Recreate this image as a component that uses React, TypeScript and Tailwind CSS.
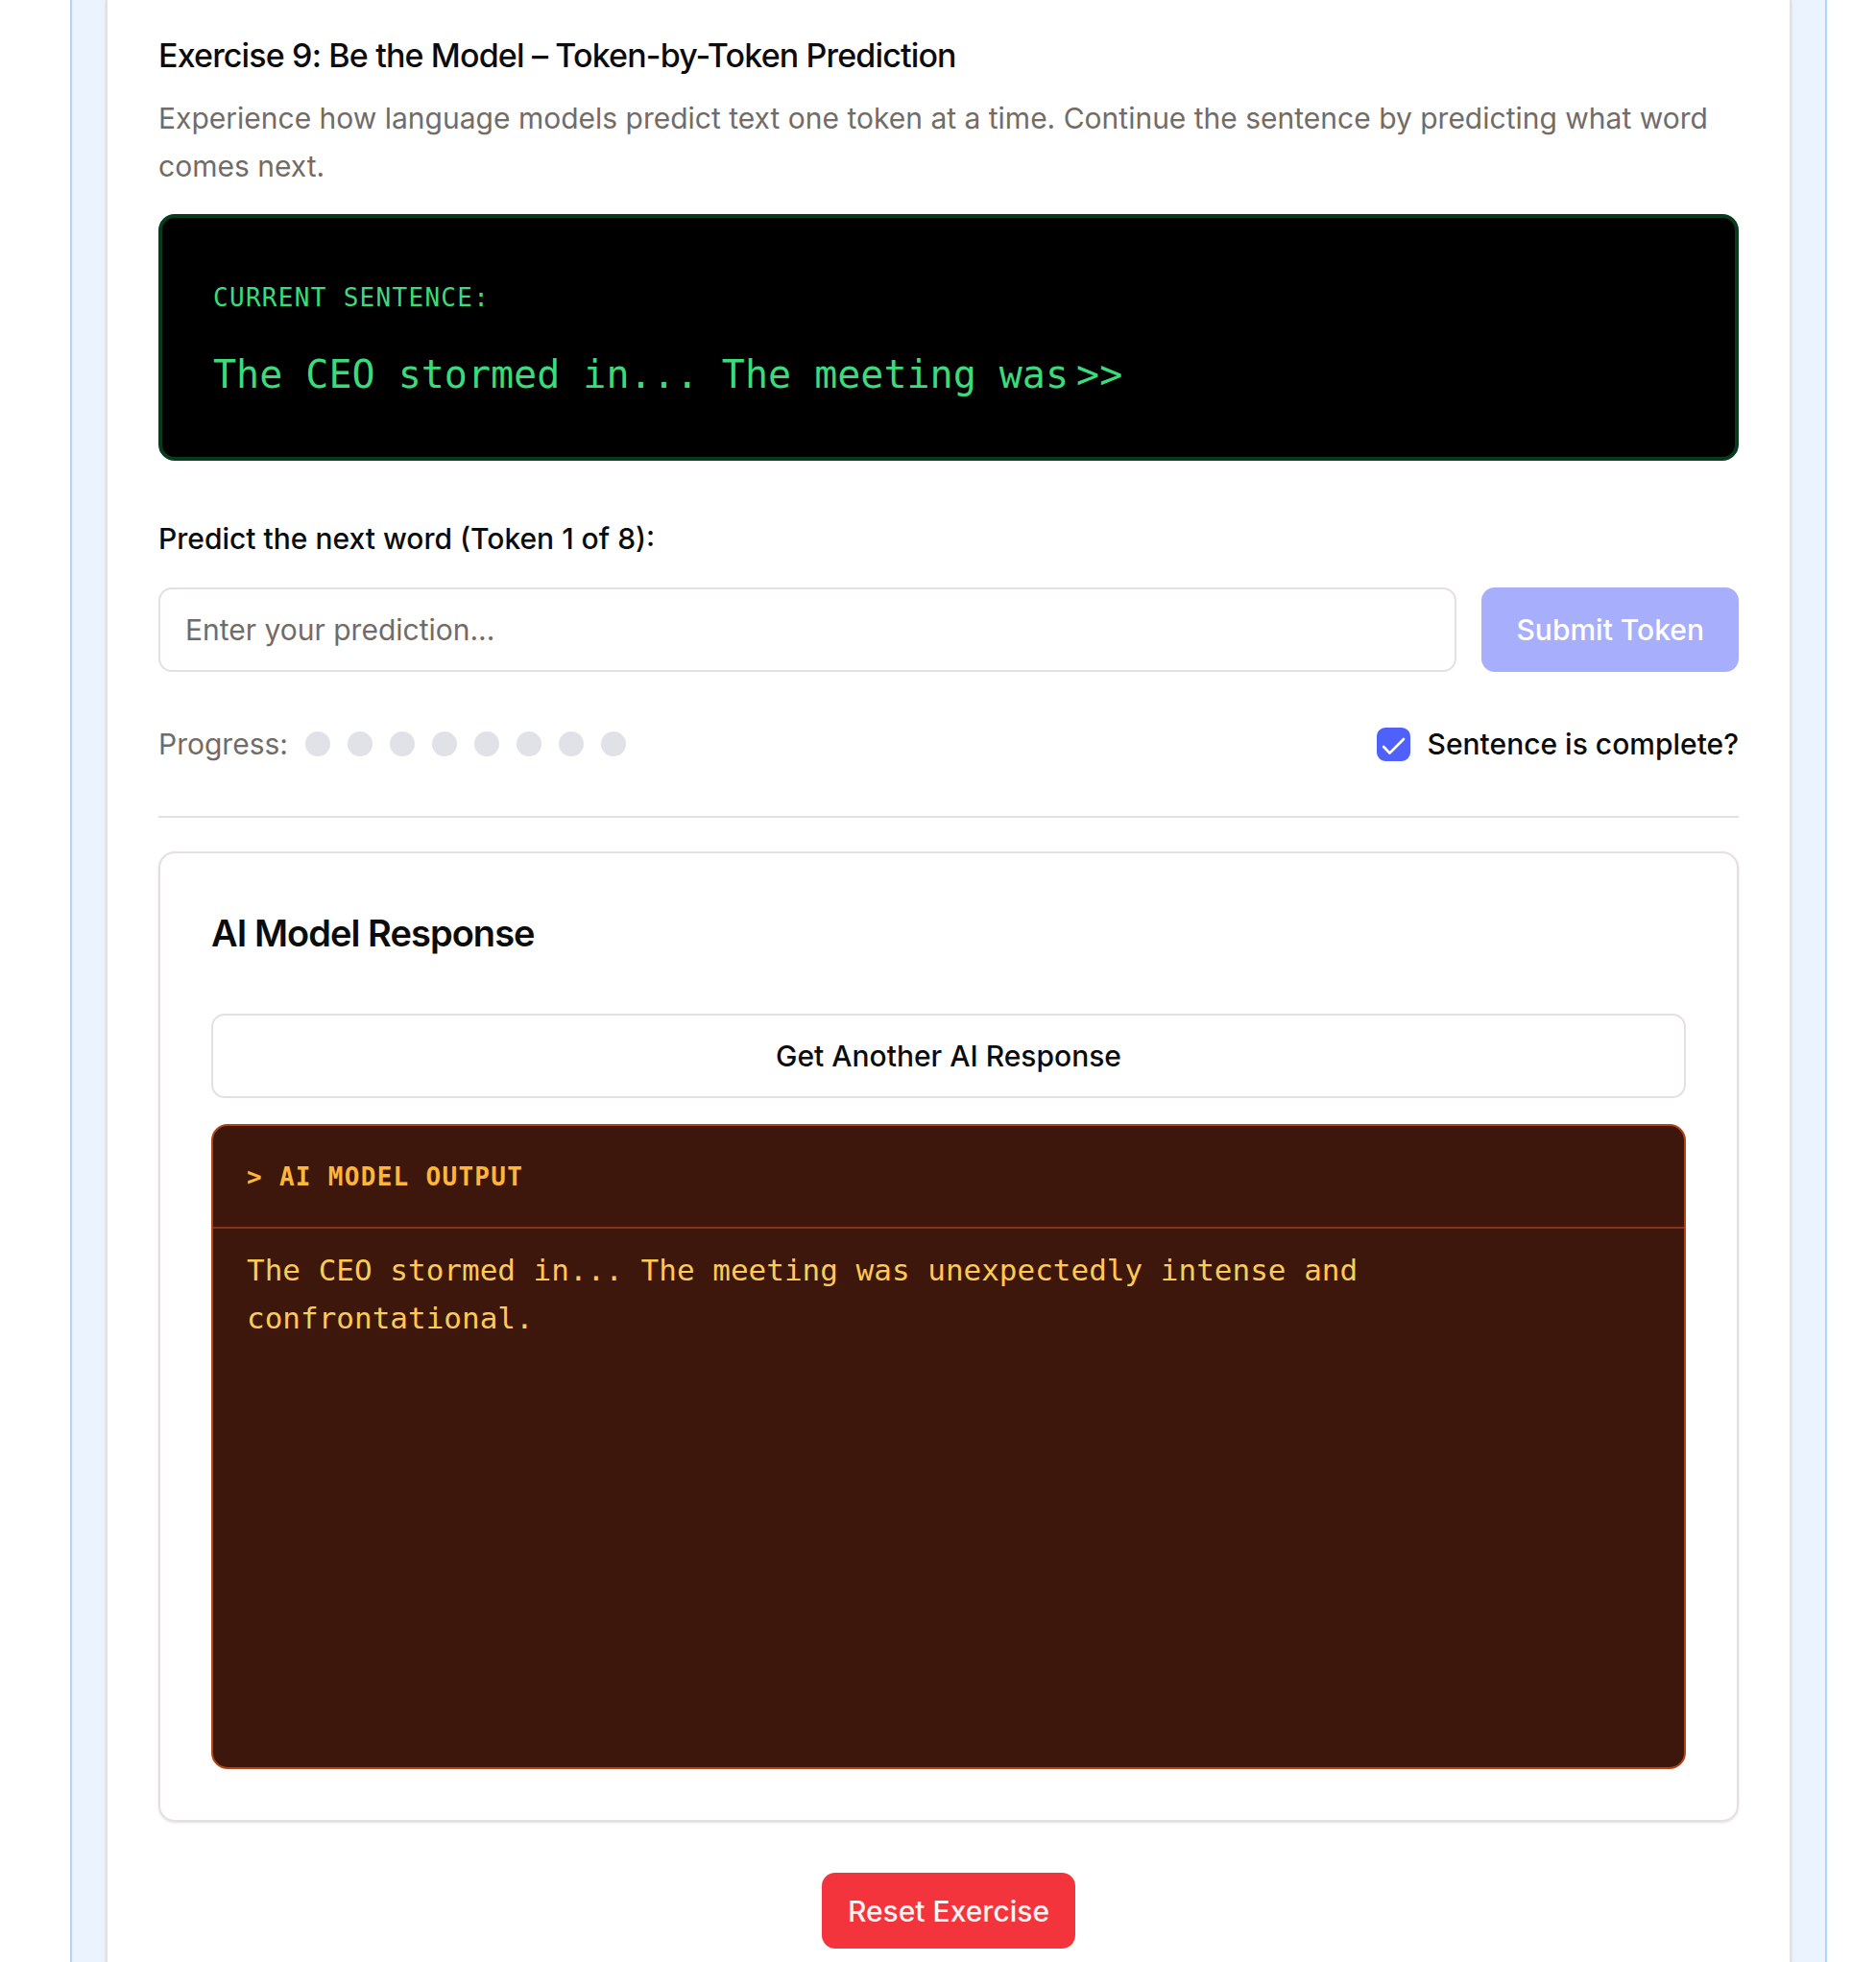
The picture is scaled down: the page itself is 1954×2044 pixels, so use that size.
import { useState } from "react";

const TOTAL_TOKENS = 8;

export default function App() {
  const [complete, setComplete] = useState(true);
  const [prediction, setPrediction] = useState("");

  return (
    <div className="flex min-h-screen flex-col bg-white pr-[51px] pl-[73px] font-['Inter',sans-serif] text-[30px] leading-[50px] text-[#0c0c0d]">
      <div className="flex grow flex-col border-x-2 border-[#b2d4fb] bg-[#eaf3fe] px-[35px]">
        <main className="grow border-x-2 border-[#e4e0e1] bg-white px-[53px] pt-9 pb-3.5 shadow-sm">
          <h2 className="text-[34px] leading-[44px] font-medium tracking-tight">
            Exercise 9: Be the Model – Token-by-Token Prediction
          </h2>
          <p className="mt-[18px] text-[#736b65]">
            Experience how language models predict text one token at a time. Continue the sentence by predicting what word
            comes next.
          </p>

          <section className="mt-[25px] rounded-[17px] border-4 border-[#073b1d] bg-black p-[53px] font-['DejaVu_Sans_Mono',monospace] text-[#3bdb7c]">
            <div className="text-[26px] leading-[60px] tracking-wider">CURRENT SENTENCE:</div>
            <p className="mt-[17px] text-[40px] leading-[66px]">
              The CEO stormed in... The meeting was<span className="ml-2">&gt;&gt;</span>
            </p>
          </section>

          <form className="mt-14" onSubmit={(e) => e.preventDefault()}>
            <label htmlFor="prediction" className="block font-medium">
              Predict the next word (Token 1 of {TOTAL_TOKENS}):
            </label>
            <div className="mt-[26px] flex gap-[26px]">
              <input
                id="prediction"
                type="text"
                value={prediction}
                onChange={(e) => setPrediction(e.target.value)}
                placeholder="Enter your prediction..."
                className="h-[88px] min-w-0 grow rounded-[14px] border-2 border-[#e4e0e1] bg-white px-[26px] placeholder:text-[#736b65]"
              />
              <button
                type="submit"
                disabled
                className="h-[88px] rounded-[14px] bg-[#a7affc] px-9 font-medium whitespace-nowrap text-white"
              >
                Submit Token
              </button>
            </div>
          </form>

          <div className="mt-[50px] flex items-center justify-between">
            <div className="flex items-center gap-[18px] text-[#736b65]">
              <span>Progress:</span>
              <div className="flex gap-[18px]">
                {Array.from({ length: TOTAL_TOKENS }, (_, i) => (
                  <span key={i} className="size-[26px] rounded-full bg-[#e1e1e8]" />
                ))}
              </div>
            </div>
            <label className="flex items-center gap-[18px] font-medium">
              <span className="grid size-[35px]">
                <input
                  type="checkbox"
                  checked={complete}
                  onChange={(e) => setComplete(e.target.checked)}
                  className="peer col-start-1 row-start-1 size-[35px] appearance-none rounded-[9px] border-2 border-[#e4e0e1] checked:border-[#4f61fa] checked:bg-[#4f61fa]"
                />
                <svg
                  viewBox="0 0 35 35"
                  fill="none"
                  stroke="white"
                  strokeWidth="2.7"
                  strokeLinecap="round"
                  strokeLinejoin="round"
                  className="pointer-events-none invisible col-start-1 row-start-1 size-[35px] peer-checked:visible"
                >
                  <path d="M7.2 20 13.5 26.6 28 12" />
                </svg>
              </span>
              Sentence is complete?
            </label>
          </div>

          <hr className="mt-[50px] border-t-2 border-[#e4e0e1]" />

          <section className="mt-[35px] rounded-[17px] border-2 border-[#e4e0e1] p-[53px] shadow-sm">
            <h3 className="mt-2 text-[38px] leading-[44px] font-semibold tracking-tight">AI Model Response</h3>
            <button
              type="button"
              className="mt-[62px] h-[88px] w-full rounded-[14px] border-2 border-[#e4e0e1] bg-white font-medium"
            >
              Get Another AI Response
            </button>
            <div className="mt-[27px] min-h-[672px] overflow-hidden rounded-[17px] border-2 border-[#b14518] bg-[#3d170c] font-['DejaVu_Sans_Mono',monospace]">
              <h4 className="border-b-2 border-[#8c3218] px-[35px] pt-9 pb-[34px] text-[26px] leading-[35px] font-bold tracking-wider text-[#fdb637]">
                &gt; AI MODEL OUTPUT
              </h4>
              <p className="px-[35px] py-[18px] text-[31px] leading-[50px] text-[#fecb52]">
                The CEO stormed in... The meeting was unexpectedly intense and confrontational.
              </p>
            </div>
          </section>

          <div className="mt-[53px] flex justify-center">
            <button
              type="button"
              className="h-[79px] rounded-[14px] bg-[#f4343c] px-[27px] font-medium text-[#fdf3f3]"
            >
              Reset Exercise
            </button>
          </div>
        </main>
      </div>
    </div>
  );
}
